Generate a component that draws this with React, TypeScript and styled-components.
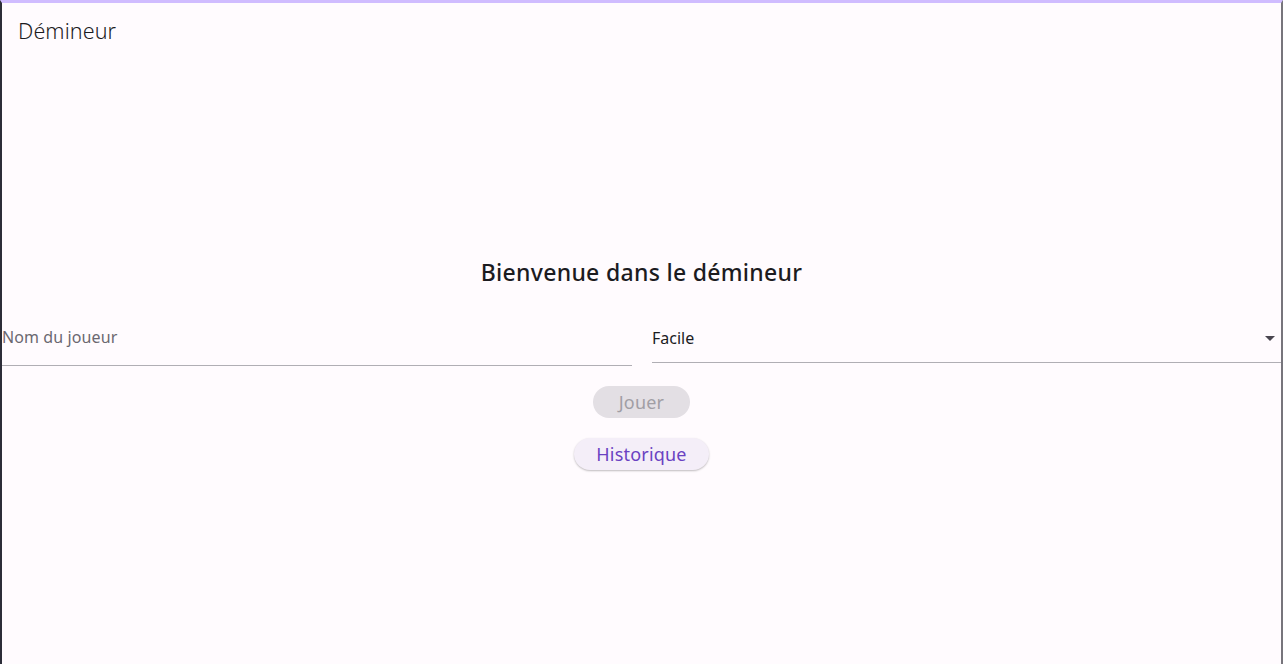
import React from "react";
import styled, { createGlobalStyle } from "styled-components";

const Global = createGlobalStyle`
  html, body { margin: 0; padding: 0; background: #fffbfe; }
  body { font-family: "Noto Sans", "DejaVu Sans", sans-serif; }
`;

const Frame = styled.div`
  width: 1283px;
  height: 664px;
  box-sizing: border-box;
  background: #fffbfe;
  border-left: 2px solid #2c2d38;
  border-right: 2px solid #77757c;
  border-top: 3px solid #d0bcff;
  display: flex;
  flex-direction: column;
  overflow: hidden;
`;

const AppBar = styled.header`
  height: 56px;
  display: flex;
  align-items: center;
  padding-left: 16px;
  padding-bottom: 2px;
  box-sizing: border-box;
`;

const AppTitle = styled.h1`
  margin: 0;
  font-size: 21.5px;
  font-weight: 300;
  color: #1c1b1f;
  letter-spacing: 0.1px;
`;

const Body = styled.main`
  display: flex;
  flex-direction: column;
  align-items: center;
  padding-top: 198px;
`;

const Heading = styled.h2`
  margin: 0;
  font-size: 23px;
  font-weight: 500;
  color: #1c1b1f;
  letter-spacing: 0.3px;
  line-height: 30px;
`;

const FieldRow = styled.div`
  width: 100%;
  display: grid;
  grid-template-columns: 630px 1fr;
  column-gap: 20px;
  margin-top: 23px;
`;

const TextField = styled.div`
  height: 56px;
  border-bottom: 1px solid #b0aeb4;
  display: flex;
  align-items: center;
  padding-bottom: 1px;
  box-sizing: border-box;
`;

const Placeholder = styled.span`
  font-size: 16px;
  font-weight: 400;
  color: #6b6870;
  letter-spacing: 0.1px;
`;

const Select = styled.div`
  height: 53px;
  border-bottom: 1px solid #b0aeb4;
  display: flex;
  align-items: center;
  justify-content: space-between;
  padding-top: 4px;
  box-sizing: border-box;
`;

const SelectValue = styled.span`
  font-size: 16px;
  font-weight: 400;
  color: #1c1b1f;
`;

const Caret = styled.svg`
  width: 10px;
  height: 5px;
  margin-right: 6px;
`;

const Button = styled.button<{ $variant: "disabled" | "tonal"; $pad: number }>`
  height: 32px;
  border: none;
  border-radius: 16px;
  font-family: inherit;
  font-size: 18px;
  font-weight: 400;
  letter-spacing: 0.2px;
  padding: 0 ${(p) => p.$pad}px;
  cursor: pointer;
  background: ${(p) => (p.$variant === "disabled" ? "#e3dfe4" : "#f4eef8")};
  color: ${(p) => (p.$variant === "disabled" ? "#a19ea4" : "#6a42c2")};
  box-shadow: ${(p) =>
    p.$variant === "disabled" ? "none" : "0 1px 2px rgba(0,0,0,0.25)"};
`;

const Buttons = styled.div`
  display: flex;
  flex-direction: column;
  align-items: center;
  gap: 20px;
  margin-top: 20px;
`;

export default function App() {
  return (
    <>
      <Global />
      <Frame>
        <AppBar>
          <AppTitle>Démineur</AppTitle>
        </AppBar>
        <Body>
          <Heading>Bienvenue dans le démineur</Heading>
          <FieldRow>
            <TextField>
              <Placeholder>Nom du joueur</Placeholder>
            </TextField>
            <Select>
              <SelectValue>Facile</SelectValue>
              <Caret viewBox="0 0 10 5">
                <path d="M0 0 L10 0 L5 5 Z" fill="#49454f" />
              </Caret>
            </Select>
          </FieldRow>
          <Buttons>
            <Button $variant="disabled" $pad={25.5} disabled>
              Jouer
            </Button>
            <Button $variant="tonal" $pad={22.5}>
              Historique
            </Button>
          </Buttons>
        </Body>
      </Frame>
    </>
  );
}
